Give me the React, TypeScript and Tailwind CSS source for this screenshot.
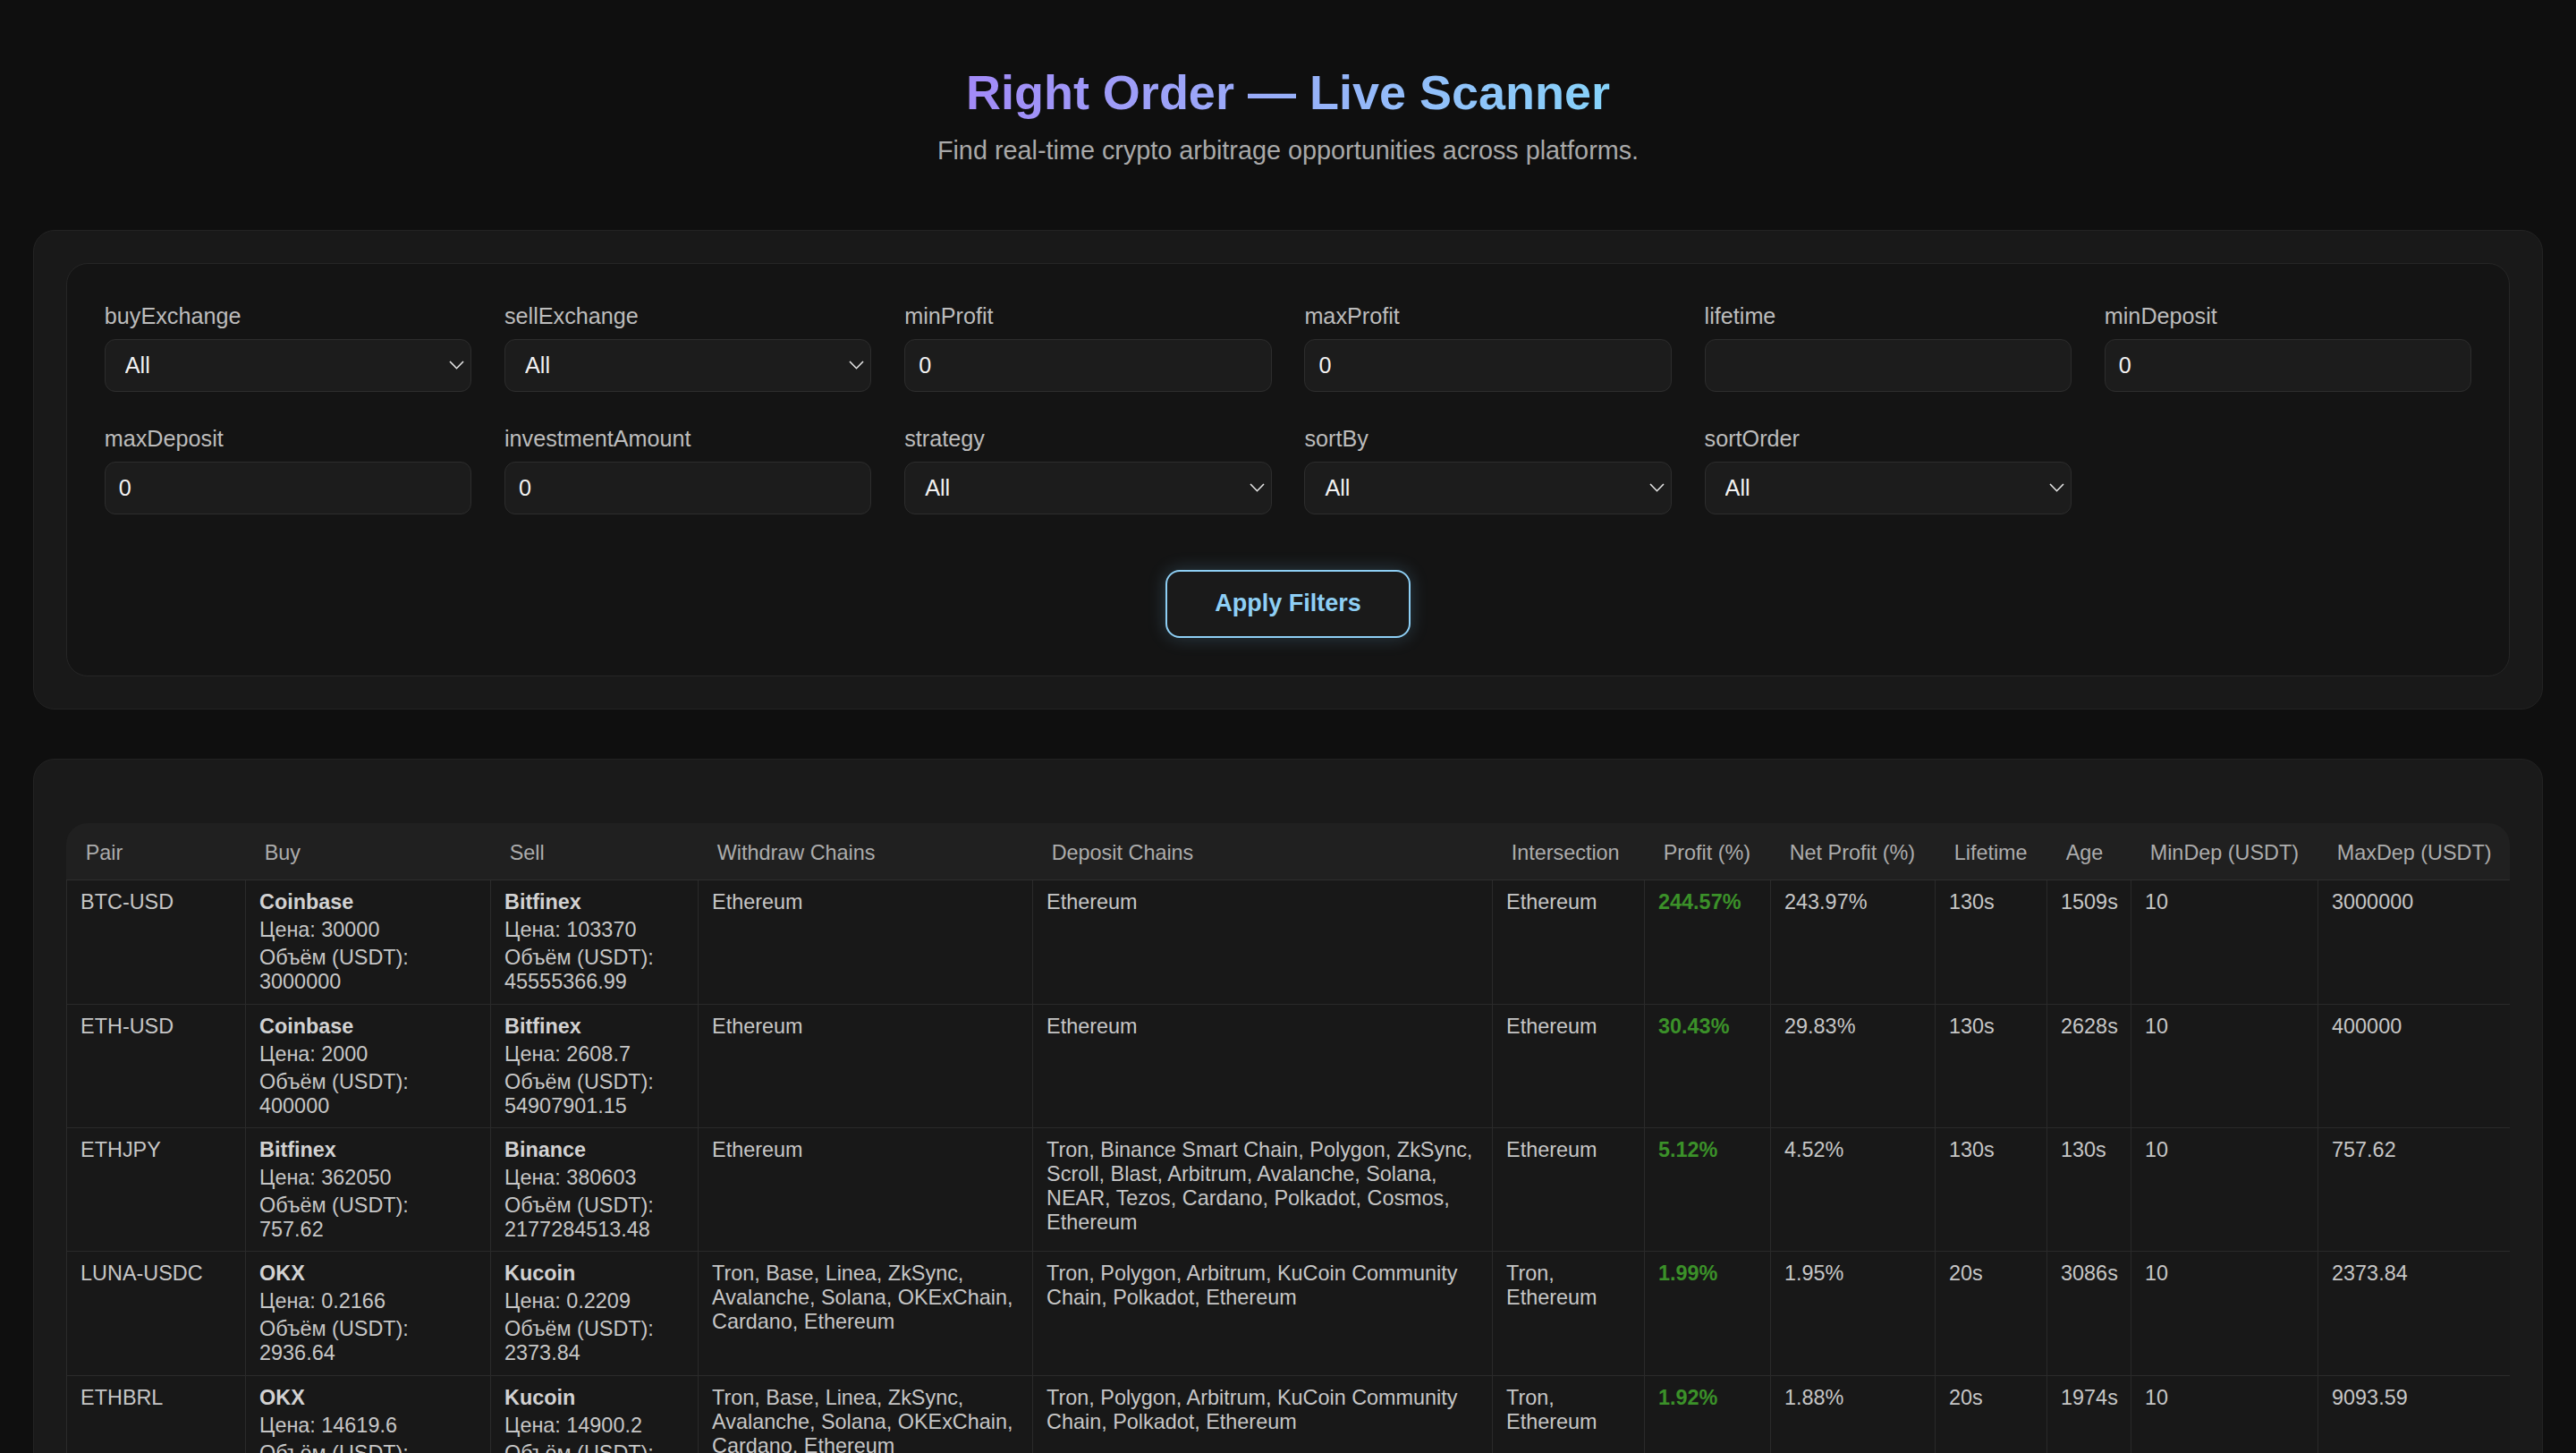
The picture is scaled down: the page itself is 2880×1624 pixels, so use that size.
import React from 'react';

type Side = { exchange: string; price: string; volume: string };
type Row = {
  pair: string;
  buy: Side;
  sell: Side;
  withdraw: string;
  deposit: string;
  intersection: string;
  profit: string;
  netProfit: string;
  lifetime: string;
  age: string;
  minDep: string;
  maxDep: string;
};

const rows: Row[] = [
  {
    pair: 'BTC-USD',
    buy: { exchange: 'Coinbase', price: '30000', volume: '3000000' },
    sell: { exchange: 'Bitfinex', price: '103370', volume: '45555366.99' },
    withdraw: 'Ethereum',
    deposit: 'Ethereum',
    intersection: 'Ethereum',
    profit: '244.57%',
    netProfit: '243.97%',
    lifetime: '130s',
    age: '1509s',
    minDep: '10',
    maxDep: '3000000',
  },
  {
    pair: 'ETH-USD',
    buy: { exchange: 'Coinbase', price: '2000', volume: '400000' },
    sell: { exchange: 'Bitfinex', price: '2608.7', volume: '54907901.15' },
    withdraw: 'Ethereum',
    deposit: 'Ethereum',
    intersection: 'Ethereum',
    profit: '30.43%',
    netProfit: '29.83%',
    lifetime: '130s',
    age: '2628s',
    minDep: '10',
    maxDep: '400000',
  },
  {
    pair: 'ETHJPY',
    buy: { exchange: 'Bitfinex', price: '362050', volume: '757.62' },
    sell: { exchange: 'Binance', price: '380603', volume: '2177284513.48' },
    withdraw: 'Ethereum',
    deposit:
      'Tron, Binance Smart Chain, Polygon, ZkSync, Scroll, Blast, Arbitrum, Avalanche, Solana, NEAR, Tezos, Cardano, Polkadot, Cosmos, Ethereum',
    intersection: 'Ethereum',
    profit: '5.12%',
    netProfit: '4.52%',
    lifetime: '130s',
    age: '130s',
    minDep: '10',
    maxDep: '757.62',
  },
  {
    pair: 'LUNA-USDC',
    buy: { exchange: 'OKX', price: '0.2166', volume: '2936.64' },
    sell: { exchange: 'Kucoin', price: '0.2209', volume: '2373.84' },
    withdraw: 'Tron, Base, Linea, ZkSync, Avalanche, Solana, OKExChain, Cardano, Ethereum',
    deposit: 'Tron, Polygon, Arbitrum, KuCoin Community Chain, Polkadot, Ethereum',
    intersection: 'Tron, Ethereum',
    profit: '1.99%',
    netProfit: '1.95%',
    lifetime: '20s',
    age: '3086s',
    minDep: '10',
    maxDep: '2373.84',
  },
  {
    pair: 'ETHBRL',
    buy: { exchange: 'OKX', price: '14619.6', volume: '12450.31' },
    sell: { exchange: 'Kucoin', price: '14900.2', volume: '9093.59' },
    withdraw: 'Tron, Base, Linea, ZkSync, Avalanche, Solana, OKExChain, Cardano, Ethereum',
    deposit: 'Tron, Polygon, Arbitrum, KuCoin Community Chain, Polkadot, Ethereum',
    intersection: 'Tron, Ethereum',
    profit: '1.92%',
    netProfit: '1.88%',
    lifetime: '20s',
    age: '1974s',
    minDep: '10',
    maxDep: '9093.59',
  },
];

// widths measured off the original table
const columns: { title: string; width: string }[] = [
  { title: 'Pair', width: 'w-[200px]' },
  { title: 'Buy', width: 'w-[274px]' },
  { title: 'Sell', width: 'w-[232px]' },
  { title: 'Withdraw Chains', width: 'w-[374px]' },
  { title: 'Deposit Chains', width: 'w-[514px]' },
  { title: 'Intersection', width: 'w-[170px]' },
  { title: 'Profit (%)', width: 'w-[141px]' },
  { title: 'Net Profit (%)', width: 'w-[184px]' },
  { title: 'Lifetime', width: 'w-[125px]' },
  { title: 'Age', width: 'w-[94px]' },
  { title: 'MinDep (USDT)', width: 'w-[209px]' },
  { title: 'MaxDep (USDT)', width: 'w-[216px]' },
];

const Chevron = () => (
  <svg
    className="pointer-events-none absolute right-[8px] top-1/2 -translate-y-1/2"
    width="17"
    height="11"
    viewBox="0 0 17 11"
    fill="none"
  >
    <path d="M1 1.5 L8.5 9.2 L16 1.5" stroke="#e6e6e6" strokeWidth="1.6" />
  </svg>
);

const fieldClass =
  'w-full h-[59px] rounded-[12px] border border-[#2d2d2d] bg-[#1c1c1c] text-[25.2px] text-[#f2f2f2] outline-none';

const labelClass = 'block text-[25.2px] leading-[29px] text-[#bcbcbc] mt-[2px] mb-[10.6px]';

const SelectField = ({ label }: { label: string }) => (
  <div>
    <label className={labelClass}>{label}</label>
    <div className="relative">
      <select className={`${fieldClass} appearance-none pl-[22px] pr-[30px]`} defaultValue="All">
        <option>All</option>
      </select>
      <Chevron />
    </div>
  </div>
);

const InputField = ({ label, value }: { label: string; value: string }) => (
  <div>
    <label className={labelClass}>{label}</label>
    <input type="text" defaultValue={value} className={`${fieldClass} px-[15px]`} />
  </div>
);

const SideCell = ({ side }: { side: Side }) => (
  <>
    <div className="font-bold text-[#d2d2d2]">{side.exchange}</div>
    <div className="mt-[4px]">Цена: {side.price}</div>
    <div className="mt-[4px]">Объём (USDT): {side.volume}</div>
  </>
);

const td = 'align-top border border-[#2a2a2a] px-[15.5px] pt-[11px] pb-[10.4px]';

export default function App() {
  return (
    <div className="min-h-screen bg-[#0f0f0f] px-[36.8px] pt-[72px] pb-[80px] font-['Liberation_Sans',Arial,sans-serif]">
      <h1 className="text-center text-[54px] leading-[62px] font-bold">
        <span className="bg-gradient-to-r from-[#a28af7] to-[#86d3fa] bg-clip-text text-transparent">
          Right Order — Live Scanner
        </span>
      </h1>
      <p className="mt-[18px] text-center text-[28.8px] leading-[33px] text-[#a9a9a9]">
        Find real-time crypto arbitrage opportunities across platforms.
      </p>

      {/* filters */}
      <div className="mt-[72.4px] rounded-[24px] border border-[#232323] bg-[#191919] p-[35.8px]">
        <div className="rounded-[24px] border border-[#262626] bg-[#141414] p-[42.2px]">
          <div className="grid grid-cols-6 gap-x-[36.8px] gap-y-[36.4px]">
            <SelectField label="buyExchange" />
            <SelectField label="sellExchange" />
            <InputField label="minProfit" value="0" />
            <InputField label="maxProfit" value="0" />
            <InputField label="lifetime" value="" />
            <InputField label="minDeposit" value="0" />
            <InputField label="maxDeposit" value="0" />
            <InputField label="investmentAmount" value="0" />
            <SelectField label="strategy" />
            <SelectField label="sortBy" />
            <SelectField label="sortOrder" />
          </div>
          <div className="mt-[61.6px] flex justify-center">
            <button className="h-[76.4px] w-[273.4px] rounded-[16px] border-2 border-[#8ecff5] bg-[#1a1a1a] text-[27px] font-bold text-[#8ecff5] shadow-[0_0_20px_rgba(125,200,250,0.22)]">
              Apply Filters
            </button>
          </div>
        </div>
      </div>

      {/* results */}
      <div className="mt-[54.8px] rounded-[24px] border border-[#232323] bg-[#1a1a1a] px-[35.8px] pt-[71.6px] pb-[35.8px]">
        <div className="overflow-hidden rounded-[24px]">
          <table className="w-full table-fixed border-collapse text-left text-[23.4px] leading-[27px] text-[#c6c6c6]">
            <colgroup>
              {columns.map((c) => (
                <col key={c.title} className={c.width} />
              ))}
            </colgroup>
            <thead>
              <tr className="bg-[#202020]">
                {columns.map((c) => (
                  <th
                    key={c.title}
                    className="border-b border-[#2e2e2e] px-[21.6px] pt-[19.5px] pb-[16.5px] font-normal text-[#acacac] whitespace-nowrap"
                  >
                    {c.title}
                  </th>
                ))}
              </tr>
            </thead>
            <tbody className="bg-[#181818]">
              {rows.map((r) => (
                <tr key={r.pair}>
                  <td className={td}>{r.pair}</td>
                  <td className={td}>
                    <SideCell side={r.buy} />
                  </td>
                  <td className={td}>
                    <SideCell side={r.sell} />
                  </td>
                  <td className={td}>{r.withdraw}</td>
                  <td className={td}>{r.deposit}</td>
                  <td className={td}>{r.intersection}</td>
                  <td className={`${td} font-bold text-[#3b9129]`}>{r.profit}</td>
                  <td className={td}>{r.netProfit}</td>
                  <td className={td}>{r.lifetime}</td>
                  <td className={td}>{r.age}</td>
                  <td className={td}>{r.minDep}</td>
                  <td className={td}>{r.maxDep}</td>
                </tr>
              ))}
            </tbody>
          </table>
        </div>
      </div>
    </div>
  );
}
